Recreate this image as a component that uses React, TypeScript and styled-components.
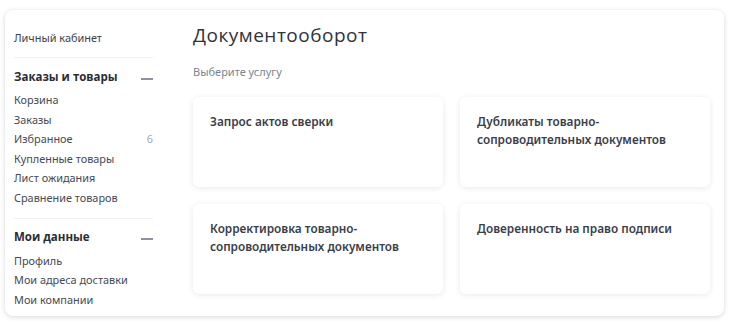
import * as React from "react";
import styled, { createGlobalStyle } from "styled-components";

const GlobalStyle = createGlobalStyle`
    html, body {
        margin: 0;
        padding: 0;
        background: #ffffff;
    }
    * {
        box-sizing: border-box;
    }
`

const Page = styled.div`
    padding: 10px 6px 10px 5px;
    width: 730px;
`

const Panel = styled.div`
    display: flex;
    width: 719px;
    height: 306px;
    background: #fff;
    border-radius: 8px;
    box-shadow: 0 1px 5px rgba(0, 0, 0, 0.16);
    overflow: hidden;
`

const Sidebar = styled.div`
    width: 148px;
    flex: 0 0 auto;
    padding: 20px 0 0 9px;
    font-family: "Noto Sans", "Open Sans", sans-serif;
`

const TopLink = styled.div`
    font-size: 10.9px;
    line-height: 16px;
    color: #3c414b;
`

const Divider = styled.div`
    height: 1px;
    background: #f1f2f4;
    margin: 11px 0 8px;
`

const GroupHead = styled.div`
    display: flex;
    justify-content: space-between;
    align-items: center;
    height: 20px;
    margin-bottom: 4px;
    font-family: "Open Sans", sans-serif;
    font-weight: 700;
    font-size: 11.5px;
    color: #2a2d33;
`

const Dash = styled.span`
    display: block;
    width: 12px;
    height: 2px;
    background: #8a93a0;
    margin-top: 5px;
`

const Item = styled.div`
    display: flex;
    justify-content: space-between;
    font-size: 10.9px;
    line-height: 19.6px;
    color: #454a53;
`

const Count = styled.span`
    color: #a3aab5;
`

const Main = styled.div`
    flex: 1 1 auto;
    padding: 13px 14px 0 40px;
`

const Title = styled.h1`
    margin: 0;
    font-family: "Open Sans", sans-serif;
    font-weight: 400;
    font-size: 19px;
    letter-spacing: 0.5px;
    line-height: 24px;
    color: #2f333a;
`

const Subtitle = styled.div`
    margin: 18px 0 18px;
    font-family: "Noto Sans", sans-serif;
    font-size: 11px;
    line-height: 14px;
    color: #7b8491;
`

const Grid = styled.div`
    display: grid;
    grid-template-columns: 250px 250px;
    column-gap: 17px;
    row-gap: 17px;
`

const Card = styled.div`
    height: 90px;
    padding: 15px 17px;
    background: #fff;
    border-radius: 6px;
    box-shadow: 0 1px 6px rgba(0, 0, 0, 0.09);
    font-family: "Noto Sans", sans-serif;
    font-weight: 600;
    font-size: 11.8px;
    line-height: 18px;
    color: #3a3e47;
`

const orders = [
    { name: "Корзина" },
    { name: "Заказы" },
    { name: "Избранное", count: 6 },
    { name: "Купленные товары" },
    { name: "Лист ожидания" },
    { name: "Сравнение товаров" },
]

const mine = ["Профиль", "Мои адреса доставки", "Мои компании"]

const services = [
    "Запрос актов сверки",
    "Дубликаты товарно-\nсопроводительных документов",
    "Корректировка товарно-\nсопроводительных документов",
    "Доверенность на право подписи",
]

export default function App(): JSX.Element {
    return <Page>
        <GlobalStyle />
        <Panel>
            <Sidebar>
                <TopLink>Личный кабинет</TopLink>
                <Divider />
                <GroupHead>Заказы и товары<Dash /></GroupHead>
                {orders.map(o => <Item key={o.name}>
                    <span>{o.name}</span>
                    {o.count ? <Count>{o.count}</Count> : null}
                </Item>)}
                <Divider style={{ marginTop: 10 }} />
                <GroupHead>Мои данные<Dash /></GroupHead>
                {mine.map(m => <Item key={m}><span>{m}</span></Item>)}
            </Sidebar>
            <Main>
                <Title>Документооборот</Title>
                <Subtitle>Выберите услугу</Subtitle>
                <Grid>
                    {services.map(s => <Card key={s}>
                        {s.split("\n").map((line, i) => <div key={i}>{line}</div>)}
                    </Card>)}
                </Grid>
            </Main>
        </Panel>
    </Page>
}
